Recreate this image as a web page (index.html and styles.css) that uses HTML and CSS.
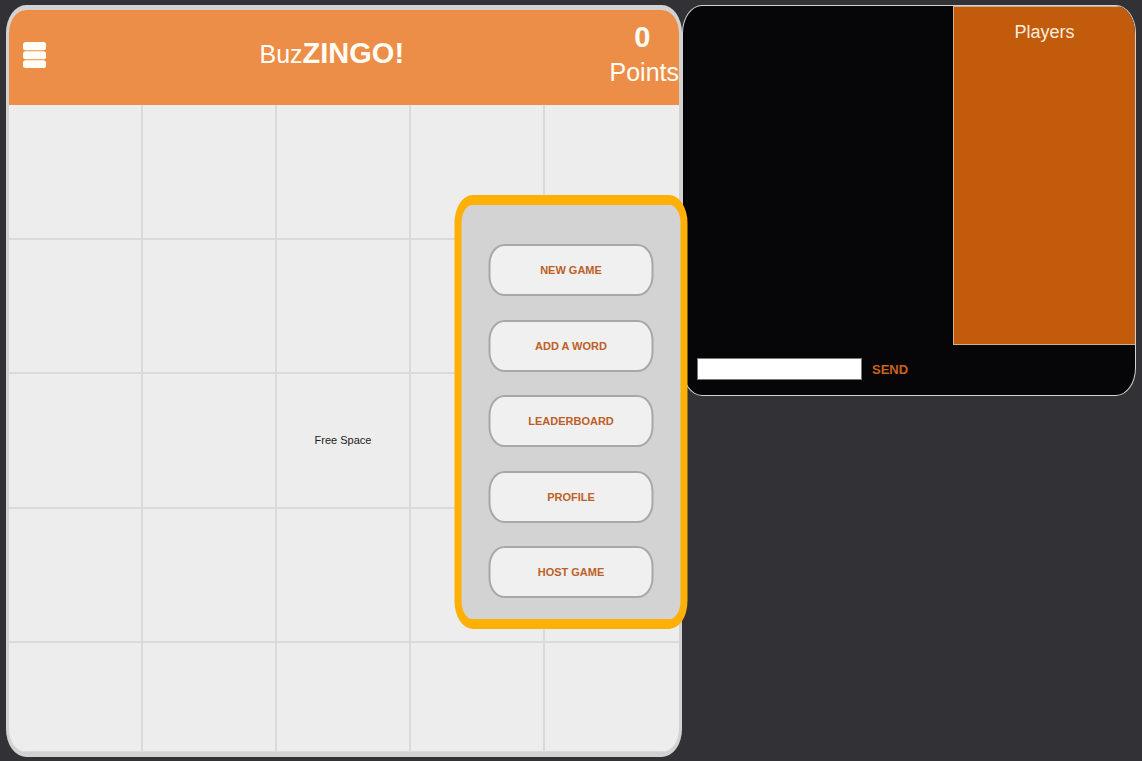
FILE: index.html
```html
<!DOCTYPE html>
<html lang="en">
<head>
<meta charset="utf-8">
<title>BuzZINGO!</title>
<link rel="stylesheet" href="styles.css">
</head>
<body>
<main class="layout">
  <section class="board">
    <header class="board-header">
      <button class="menu-toggle" type="button" aria-label="Menu">
        <svg class="menu-icon" viewBox="0 0 23 26" aria-hidden="true">
          <rect width="23" height="8.2" rx="2.5"/>
          <rect y="9.2" width="23" height="8" rx="2.5"/>
          <rect y="18.2" width="23" height="7.8" rx="2.5"/>
        </svg>
      </button>
      <h1 class="title">Buz<b class="title-strong">ZINGO!</b></h1>
      <p class="score"><b class="score-value">0</b>Points</p>
    </header>
    <div class="cells">
      <div class="cell"></div><div class="cell"></div><div class="cell"></div><div class="cell"></div><div class="cell"></div>
      <div class="cell"></div><div class="cell"></div><div class="cell"></div><div class="cell"></div><div class="cell"></div>
      <div class="cell"></div><div class="cell"></div><div class="cell">Free Space</div><div class="cell"></div><div class="cell"></div>
      <div class="cell"></div><div class="cell"></div><div class="cell"></div><div class="cell"></div><div class="cell"></div>
      <div class="cell"></div><div class="cell"></div><div class="cell"></div><div class="cell"></div><div class="cell"></div>
    </div>
  </section>
  <aside class="chat">
    <div class="chat-body">
      <div class="messages"></div>
      <div class="players"><h2 class="players-title">Players</h2></div>
    </div>
    <form class="chat-form">
      <input class="chat-input" type="text" aria-label="Message">
      <button class="send" type="button">SEND</button>
    </form>
  </aside>
</main>
<nav class="menu" aria-label="Game menu">
  <button class="menu-item" type="button">NEW GAME</button>
  <button class="menu-item" type="button">ADD A WORD</button>
  <button class="menu-item" type="button">LEADERBOARD</button>
  <button class="menu-item" type="button">PROFILE</button>
  <button class="menu-item" type="button">HOST GAME</button>
</nav>
</body>
</html>
```
FILE: styles.css
```css
* {
  box-sizing: border-box;
}

body {
  margin: 0;
  background: #323136;
  font-family: "Liberation Sans Narrow", "Liberation Sans", Arial, sans-serif;
}

button,
input {
  font-family: inherit;
}

.layout {
  display: grid;
  grid-template-columns: 676fr 454fr;
  align-items: start;
  min-height: 100vh;
  padding: 5px 6px 4px;
}

.board {
  display: flex;
  flex-direction: column;
  align-self: stretch;
  overflow: hidden;
  border: solid #d3d2d2;
  border-width: 5px 3px;
  border-radius: 20px / 28px;
  background: #ededed;
}

.board-header {
  display: flex;
  justify-content: space-between;
  align-items: center;
  height: 95px;
  background: #ed8e48;
  color: #fffdf6;
}

.menu-toggle {
  display: flex;
  padding: 0 8px 6px 14px;
  border: 0;
  background: none;
}

.menu-icon {
  width: 23px;
  height: 26px;
  fill: #fffdf6;
}

.title {
  margin: 0;
  padding-bottom: 8px;
  font-size: 25px;
  font-weight: normal;
  line-height: 36px;
}

.title-strong {
  font-size: 29px;
}

.score {
  margin: 0;
  padding-bottom: 6px;
  font-size: 25px;
  line-height: 35px;
  text-align: center;
}

.score-value {
  display: block;
  padding-right: 4px;
  font-size: 29px;
}

.cells {
  display: grid;
  flex: 1;
  grid-template-columns: repeat(5, 1fr);
  grid-template-rows: repeat(4, 135fr) 109fr;
}

.cell {
  display: flex;
  align-items: center;
  justify-content: center;
  border: solid #dadada;
  border-width: 0 2px 2px 0;
  color: #222;
  font-size: 11px;
}

.cell:nth-child(5n) {
  border-right: 0;
}

.cell:nth-child(n + 21) {
  border-bottom-width: 1px;
}

.chat {
  overflow: hidden;
  border: 1px solid #d3d2d2;
  border-radius: 20px / 28px;
  background: #060608;
}

.chat-body {
  display: grid;
  grid-template-columns: 270fr 182fr;
  min-height: 339px;
}

.players {
  border: solid #d2b08e;
  border-width: 1px 0 1px 1px;
  background: #c35b0c;
}

.players-title {
  margin: 0;
  padding-top: 13px;
  color: #fbeedd;
  font-size: 18px;
  font-weight: normal;
  line-height: 24px;
  text-align: center;
}

.chat-form {
  display: flex;
  align-items: center;
  gap: 10px;
  height: 50px;
  padding: 0 0 2px 14px;
}

.chat-input {
  width: 165px;
  height: 22px;
  border: 1px solid #777;
  background: #fff;
}

.send {
  padding: 0;
  border: 0;
  background: none;
  color: #c8621d;
  font-size: 13px;
  font-weight: bold;
}

.menu {
  position: absolute;
  top: 195px;
  left: 50%;
  display: flex;
  flex-direction: column;
  justify-content: space-between;
  width: 233px;
  min-height: 434px;
  padding: 39px 27px 21px;
  border: solid #ffb007;
  border-width: 10px 7px;
  border-radius: 18px / 28px;
  background: #d3d3d3;
  transform: translateX(-50%);
}

.menu-item {
  height: 52px;
  padding: 0;
  border: 2px solid #a8a8a8;
  border-radius: 16px / 20px;
  background: #f0f0f0;
  color: #bd6027;
  font-size: 11px;
  font-weight: bold;
}
```
